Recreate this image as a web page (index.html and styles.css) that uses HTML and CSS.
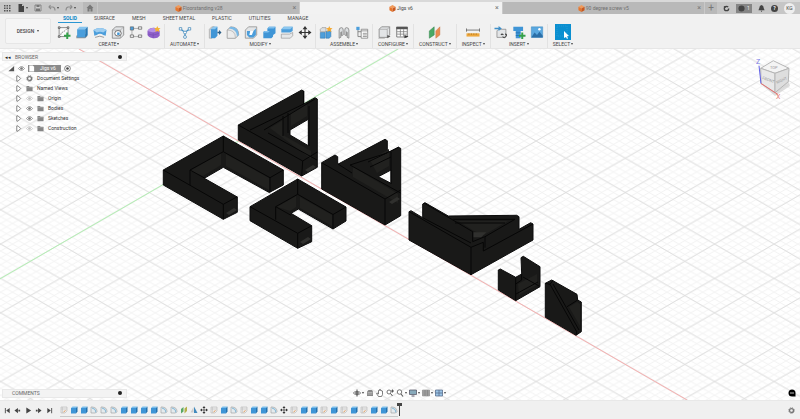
FILE: index.html
```html
<!DOCTYPE html>
<html lang="en">
<head>
<meta charset="utf-8">
<title>Jigs v6</title>
<link rel="stylesheet" href="styles.css">
</head>
<body>
<svg class="defs" aria-hidden="true">
  <defs>
    <symbol id="box" viewBox="0 0 16 16"><path fill="#79bdec" d="M2 4l3-3h10l-3 3z"/><path fill="#3f95d6" d="M2 4h10v11H2z"/><path fill="#2372ae" d="M12 4l3-3v10l-3 4z"/></symbol>
    <symbol id="extrude" viewBox="0 0 16 16"><path fill="#8a8f94" d="M1 12l3-2h9l2 2-3 3H1z"/><path fill="#85c4ef" d="M2 4l3-3h10l-3 3z"/><path fill="#4a9edc" d="M2 4h10v10H2z"/><path fill="#2577b5" d="M12 4l3-3v10l-3 3z"/></symbol>
    <symbol id="sketch" viewBox="0 0 16 16"><path fill="#fafafa" stroke="#777" d="M2 2h11v11H2z"/><path fill="none" stroke="#777" stroke-dasharray="2 1" d="M4 11C4 7 8 8 11 4"/><path fill="#fff" stroke="#333" stroke-width=".8" d="M1 1h2v2H1zM12 1h2v2h-2zM1 12h2v2H1z"/><path stroke="#35a04a" stroke-width="2.400" d="M12 8v8M8 12h8"/></symbol>
    <symbol id="revolve" viewBox="0 0 16 16"><path fill="#4c9edb" d="M0 5q8-5 16 0l-1 7-3-1q-4-3-8 0l-3 1z"/><path fill="#9dcdf0" d="M0 5q8-5 16 0l-4 3q-4-2-8 0z"/><path fill="none" stroke="#888" d="M2 14q6-3 11 0"/></symbol>
    <symbol id="hole" viewBox="0 0 16 16"><path fill="#e2e4e6" stroke="#777" stroke-width=".9" d="M1 5l4-4h10v10l-4 4H1z"/><path fill="none" stroke="#999" stroke-width=".7" d="M1 5h10v10M11 5l4-4"/><ellipse cx="8" cy="9" rx="4" ry="3.400" fill="#fff" stroke="#555"/><path fill="#3f95d6" d="M7 8h3v3H7z"/></symbol>
    <symbol id="pattern" viewBox="0 0 16 16"><path fill="none" stroke="#999" stroke-width=".9" d="M4 3h8M3 4v9M4 13h8"/><path fill="#4c9edb" stroke="#555" stroke-width=".7" d="M1 1h4v4H1z"/><path fill="#eee" stroke="#555" stroke-width=".8" d="M11 1h4v3h-4zM1 11h4v3H1zM11 11h4v3h-4z"/></symbol>
    <symbol id="form" viewBox="0 0 16 16"><path fill="#8e5fc9" d="M0 6q2-4 8-4 6 1 7 4v6q-3 4-8 3-6-1-7-4z"/><path fill="#b58fe6" d="M0 6q3-4 8-4l5 3q-3 3-6 3z"/><path stroke="#7548b3" stroke-width=".7" fill="none" d="M7 8v7M1 10q6 3 13-1"/><path fill="#f3b233" d="M12 0l1.200 2.500 2.800.2-2 2 .6 2.800L12 6 9.600 7.500l.5-2.800-2-2 2.800-.2z"/></symbol>
    <symbol id="automate" viewBox="0 0 16 16"><path fill="none" stroke="#3f8fc8" stroke-width="1.500" d="M3 4l5 4 5-4M8 8v5"/><path fill="#fff" stroke="#4f8fbd" d="M1 2h3v3H1zM12 2h3v3h-3z"/><circle cx="8" cy="8" r="1.800" fill="#fff" stroke="#4f8fbd"/><circle cx="8" cy="13.500" r="1.800" fill="#fff" stroke="#4f8fbd"/></symbol>
    <symbol id="presspull" viewBox="0 0 16 16"><path fill="#d5d8da" stroke="#888" stroke-width=".6" d="M1 4l3-3h3v11l-3 3H1z"/><path fill="#3f95d6" d="M3 4l3-3h5v11l-3 3H3z"/><path fill="#8cc7ef" d="M3 4l3-3h5L8 4z"/><path fill="#2c5f88" d="M11 7h2V5l3 3-3 3V9h-2z"/></symbol>
    <symbol id="fillet" viewBox="0 0 16 16"><path fill="#e3e5e7" stroke="#888" stroke-width=".9" d="M1 5l4-4q10 0 10 10l-4 4H1z"/><path fill="#7ab9e6" d="M3 3l2-2q10 0 10 10l-2 2Q13 4 3 3z"/><path fill="#ececec" stroke="#999" stroke-width=".6" d="M1 5q10 0 10 10H1z"/></symbol>
    <symbol id="shell" viewBox="0 0 16 16"><path fill="#e3e5e7" stroke="#888" stroke-width=".9" d="M1 5l4-4h10v10l-4 4H1z"/><path fill="#4c9edb" d="M3 6h8l3-3v8l-3 3H6L3 11z"/><path fill="#fff" d="M7 6h4l-2 5H6z"/></symbol>
    <symbol id="combine" viewBox="0 0 16 16"><path fill="#3f95d6" d="M6 3l2-2h8v8l-3 2v2l-2 2H1V7l2-1h3z"/><path fill="#80c0ee" d="M6 3l2-2h8l-2 2zM1 8l2-2h6L7 8z"/></symbol>
    <symbol id="split" viewBox="0 0 16 16"><path fill="#4c9edb" d="M1 4l3-3h11v5l-3 2H1z"/><path fill="#8cc7ef" d="M1 4l3-3h11l-3 3z"/><path fill="#e6e8ea" stroke="#888" stroke-width=".7" d="M1 10h10l4-2v4l-3 3H1z"/></symbol>
    <symbol id="move" viewBox="0 0 16 16"><path stroke="#333" stroke-width="1.400" d="M8 2v12M2 8h12"/><path fill="#333" d="M8 0l3 4H5zM8 16l3-4H5zM0 8l4-3v6zM16 8l-4-3v6z"/></symbol>
    <symbol id="component" viewBox="0 0 16 16"><path fill="#dcdfe1" stroke="#888" stroke-width=".7" d="M1 4l2-2h5v5H1z"/><path fill="#4c9edb" stroke="#2c6fa5" stroke-width=".6" d="M1 8h6v7H1zM8 7l2-1h4v7l-2 2H8z"/><path fill="#f3a933" d="M12 0l1.200 2.500 2.800.2-2 2 .6 2.800L12 6 9.600 7.500l.5-2.800-2-2 2.800-.2z"/></symbol>
    <symbol id="joint" viewBox="0 0 16 16"><path fill="#dcdfe1" stroke="#777" stroke-width=".9" d="M2 15V5q0-3 3-3 2 0 2 3v6l-2 1V7L4 8v6zM14 15V5q0-3-3-3-2 0-2 3v6l2 1V7l1 1v6z"/></symbol>
    <symbol id="structure" viewBox="0 0 16 16"><path fill="none" stroke="#777" d="M3 5v8h4M3 7h4"/><path fill="#4c9edb" d="M1 1h4v4H1z"/><path fill="#fff" stroke="#777" stroke-width=".9" d="M7 4h8v11H7z"/><path stroke="#777" stroke-width=".9" d="M7 6h8M9 9h5M9 11h5M9 13h5"/></symbol>
    <symbol id="config" viewBox="0 0 16 16"><path fill="#e3e5e7" stroke="#777" stroke-width=".9" d="M2 4l3-3h10v10l-3 3H2z"/><path fill="none" stroke="#999" stroke-width=".8" d="M2 4h10v10M12 4l3-3M1 15h8"/><path fill="#555" d="M12 11l4 2-4 2z"/></symbol>
    <symbol id="table" viewBox="0 0 16 16"><path fill="#fff" stroke="#666" d="M1.500 1.500h13v12h-13z"/><path fill="#555" d="M1 1h14v3H1z"/><path stroke="#777" stroke-width=".9" d="M2 7h12M2 10h12M6 4v9M10 4v9"/><path fill="#333" d="M11 11l5 2-5 2z"/></symbol>
    <symbol id="plane" viewBox="0 0 16 16"><path fill="#49a965" stroke="#2f8048" stroke-width=".6" d="M1 6l6-5v10l-6 4z"/><path fill="#e98c50" stroke="#c06a38" stroke-width=".5" d="M9 6l5-5v10l-5 4z"/></symbol>
    <symbol id="measure" viewBox="0 0 16 16"><path fill="none" stroke="#555" stroke-width=".9" d="M0 5h16M0 3v4M16 3v4"/><path fill="#eda73c" d="M0 9h16v4H0z"/><path stroke="#a8701c" stroke-width=".8" d="M3 9v2M6 9v2M9 9v2M12 9v2"/></symbol>
    <symbol id="derive" viewBox="0 0 16 16"><path fill="#e3e5e7" stroke="#777" stroke-width=".8" d="M3 6l2-2h9v8l-2 2H3z"/><path fill="#3f8fc8" d="M0 2h5V0l4 3-4 3V4H0z"/><path fill="none" stroke="#444" stroke-width="1.300" d="M8 11q1-2 3 0M10 13q2 3 4 0 2-3-1-3"/></symbol>
    <symbol id="bolt" viewBox="0 0 16 16"><path fill="#3f95d6" d="M1 1h12v5h-3v9H4V6H1z"/><path fill="#1f6daa" d="M4 8h6v1H4zM4 11h6v1H4z"/><path stroke="#35a04a" stroke-width="2.400" d="M12 8v8M8 12h8"/></symbol>
    <symbol id="canvas" viewBox="0 0 16 16"><path fill="#5aa8e0" stroke="#3d85ba" stroke-width=".6" d="M1 1h14v13H1z"/><path fill="#2b6fa8" d="M1 14l4-6 3 3 3-4 4 5v2z"/><circle cx="11" cy="4" r="1.500" fill="#fff"/></symbol>
    <symbol id="select" viewBox="0 0 16 16"><path fill="#0a8fd0" d="M0 0h16v16H0z"/><path fill="none" stroke="#2fa3da" stroke-width=".6" stroke-dasharray="1 1" d="M2 2h10v10H2z"/><path fill="#fff" d="M9 7l5 5-2 .3 1 2-1 .6-1-2-2 1z"/></symbol>
    <symbol id="t-sketch" viewBox="0 0 16 16"><path fill="#ececec" stroke="#aaa" d="M2 2h12v8l-4 4H2z"/><path fill="none" stroke="#bbb" d="M5 2v12M2 6h12"/><path stroke="#e59c58" stroke-width="2" d="M7 12l4-3"/></symbol>
    <symbol id="t-fillet" viewBox="0 0 16 16"><path fill="#e4eaed" stroke="#888" d="M2 5V2h3q9 1 9 9l-3 3H2z"/><path fill="none" stroke="#5fa5d0" stroke-width="1.500" d="M4 4q8 1 8 9"/></symbol>
    <symbol id="t-plane" viewBox="0 0 16 16"><path fill="#59a864" d="M2 6l5-4v9l-5 4z"/><path fill="#b4b04a" d="M9 5l5-4v9l-5 5z"/></symbol>
    <symbol id="t-mirror" viewBox="0 0 16 16"><path fill="#ccc" d="M7 2v11H1z"/><path fill="#4189bd" d="M8 1v13h7z"/></symbol>
    <symbol id="cube" viewBox="0 0 16 16"><path fill="#f19a5a" d="M8 0l7 4-7 4-7-4z"/><path fill="#e87529" d="M1 4l7 4v8l-7-4z"/><path fill="#c9571b" d="M15 4L8 8v8l7-4z"/></symbol>
    <symbol id="folder" viewBox="0 0 16 16"><path fill="#858585" d="M1 2h6l1 2h7v10H1z"/><path stroke="#bbb" d="M1 6h14"/></symbol>
    <symbol id="eye" viewBox="0 0 16 16"><path fill="#fff" stroke="currentColor" stroke-width="1.600" d="M1 8q7-9 14 0-7 9-14 0z"/><circle cx="8" cy="8" r="3" fill="currentColor"/></symbol>
    <symbol id="gear" viewBox="0 0 16 16"><circle cx="8" cy="8" r="4.500" fill="none" stroke="currentColor" stroke-width="3"/><circle cx="8" cy="8" r="6.500" fill="none" stroke="currentColor" stroke-width="2" stroke-dasharray="2.500 2.600"/></symbol>
    <symbol id="arrow" viewBox="0 0 16 16"><path fill="#fff" stroke="#555" stroke-width="1.600" d="M4 2h3l6 6-6 6H4z"/></symbol>
    <symbol id="undo" viewBox="0 0 16 16"><path fill="none" stroke="#8c8c8c" stroke-width="2.200" d="M5 2L2 6l4 4M2 6h8q4 1 4 7"/></symbol>
    <symbol id="lens" viewBox="0 0 16 16"><circle cx="7" cy="6" r="4.500" fill="#fff" stroke="#555" stroke-width="1.600"/><path stroke="#555" stroke-width="2.200" d="M10 10l4 5"/></symbol>
    <pattern id="minor" width="11.900" height="6.872" x="238.600" y="141" patternUnits="userSpaceOnUse"><path d="M0 0l11.900 6.872M0 6.872L11.900 0" stroke="#efefef" stroke-width=".8"/></pattern>
    <pattern id="major" width="59.500" height="34.360" x="238.600" y="141" patternUnits="userSpaceOnUse"><path d="M0 0l59.500 34.360M0 34.360L59.500 0" stroke="#dadada" stroke-width=".8"/></pattern>
  </defs>
</svg>

<header class="topbar">
  <div class="quick">
    <button aria-label="Data panel"><svg viewBox="0 0 16 16"><path fill="#555" d="M2 2h3v3H2zM7 2h3v3H7zM12 2h3v3h-3zM2 7h3v3H2zM7 7h3v3H7zM12 7h3v3h-3zM2 12h3v3H2zM7 12h3v3H7zM12 12h3v3h-3z"/></svg></button>
    <button class="drop" aria-label="File"><svg viewBox="0 0 16 16"><path fill="#444" d="M3 0h7l4 4v12H3z"/><path fill="#ccc" d="M10 0l4 4h-4z"/></svg></button>
    <button aria-label="Save"><svg viewBox="0 0 16 16"><path fill="#ccc" stroke="#777" stroke-width="1.600" d="M2 2h12v12H2z"/><path fill="#777" d="M5 2h6v4H5zM4 9h8v5H4z"/></svg></button>
    <button class="drop" aria-label="Undo"><svg><use href="#undo"/></svg></button>
    <button class="drop" aria-label="Redo"><svg class="flip"><use href="#undo"/></svg></button>
    <button class="home" aria-label="Home"><svg viewBox="0 0 16 16"><path fill="#777" d="M8 1l7 7h-2v7h-4v-5H7v5H3V8H1z"/></svg></button>
  </div>
  <nav class="docs">
    <div class="doc"><svg><use href="#cube"/></svg><a href="#">Floorstanding v28</a><button aria-label="Close">×</button></div>
    <div class="doc active"><svg><use href="#cube"/></svg><a href="#">Jigs v6</a><button aria-label="Close">×</button></div>
    <div class="doc"><svg><use href="#cube"/></svg><a href="#">90 degree screw v5</a><button aria-label="Close">×</button></div>
  </nav>
  <div class="account">
    <button class="add" aria-label="New design">+</button>
    <button aria-label="Extensions"><svg viewBox="0 0 16 16"><circle cx="8" cy="8" r="5" fill="none" stroke="#444" stroke-width="3" stroke-dasharray="25 6"/><path fill="#444" d="M1 2h6v5z"/></svg></button>
    <button class="jobs" aria-label="Job status"><svg viewBox="0 0 16 16"><circle cx="8" cy="8" r="7" fill="#444"/></svg>1</button>
    <button aria-label="Notifications"><svg viewBox="0 0 16 16"><path fill="#444" d="M8 0q5 1 5 7l2 5H1l2-5q0-6 5-7zM6 13h4l-2 3z"/></svg></button>
    <button class="help" aria-label="Help">?</button>
    <button class="avatar">KG</button>
  </div>
</header>

<section class="ribbon">
  <button class="design drop">DESIGN</button>
  <div class="tools">
    <nav class="modes">
      <a class="on" href="#">SOLID</a><a href="#">SURFACE</a><a href="#">MESH</a><a href="#">SHEET METAL</a><a href="#">PLASTIC</a><a href="#">UTILITIES</a><a href="#">MANAGE</a>
    </nav>
    <div class="groups">
      <div class="group"><div class="icons"><svg><use href="#sketch"/></svg><svg><use href="#extrude"/></svg><svg><use href="#revolve"/></svg><svg><use href="#hole"/></svg><svg><use href="#pattern"/></svg><svg><use href="#form"/></svg></div><button class="drop">CREATE</button></div>
      <div class="group"><div class="icons"><svg><use href="#automate"/></svg></div><button class="drop">AUTOMATE</button></div>
      <div class="group"><div class="icons"><svg><use href="#presspull"/></svg><svg><use href="#fillet"/></svg><svg><use href="#shell"/></svg><svg><use href="#combine"/></svg><svg><use href="#split"/></svg><svg><use href="#move"/></svg></div><button class="drop">MODIFY</button></div>
      <div class="group"><div class="icons"><svg><use href="#component"/></svg><svg><use href="#joint"/></svg><svg><use href="#structure"/></svg></div><button class="drop">ASSEMBLE</button></div>
      <div class="group"><div class="icons"><svg><use href="#config"/></svg><svg><use href="#table"/></svg></div><button class="drop">CONFIGURE</button></div>
      <div class="group"><div class="icons"><svg><use href="#plane"/></svg></div><button class="drop">CONSTRUCT</button></div>
      <div class="group"><div class="icons"><svg><use href="#measure"/></svg></div><button class="drop">INSPECT</button></div>
      <div class="group"><div class="icons"><svg><use href="#derive"/></svg><svg><use href="#bolt"/></svg><svg><use href="#canvas"/></svg></div><button class="drop">INSERT</button></div>
      <div class="group"><div class="icons big"><svg><use href="#select"/></svg></div><button class="drop">SELECT</button></div>
    </div>
  </div>
</section>

<main class="viewport">
  <svg class="scene" viewBox="0 49 800 351" preserveAspectRatio="xMidYMid slice" role="img" aria-label="Model">
    <path fill="#fff" d="M0 49h800v351H0z"/>
    <path fill="url(#minor)" d="M0 49h800v351H0z"/>
    <path fill="url(#major)" d="M0 49h800v351H0z"/>
    <path stroke="#b4f0b4" d="M0 278.800L398 49"/>
    <path stroke="#f6b0b0" d="M79 49l608 351"/>
    <g class="solid">
      <path d="M238.300 125L301.700 90l2 1v13L315 97.700l2.300 1.300v68.300L301.700 176l-63.400-36zM308.300 119.300L290 130v5l18.300 10.700z"/>
      <path d="M163.300 170l60-34 60 34v15l-14 7.500-46-25.200-19 11 33 18.700v15.300l-14 7-60-34.300z"/>
      <path d="M250 206.700l47.700-27.700L346 207v14l-13 8-34.700-20-7.300 4.300 20.700 12.400v16l-14 6.600L250 220.700z"/>
      <path d="M321.700 162.700L335 155l2.700 1.700v7.600L385 139.300l2.300 1.400v12.600l11-6 2.400 1v67.400L385 225l-63.300-36zM391 170l-12.700 6.700L391 183.300z"/>
      <path d="M409 211.700l2-1 11.700 7V204l2.300-1.300 23.300 13.300 68.400-.7 2.300 1.400v12.600l11.700-6.600 2.300 1.300v16l-62 34.700L409 240z"/>
      <path d="M498.300 270l2-1 15.400 8.300 6-3.300-.7-16.300 2.300-1.400L540 266.700v20l-24.300 14-17.400-10.700z"/>
      <path d="M545.300 283.300l6.400-3.300L577 294.300l.7 5.700 3.600 2v29.700l-5.300 3.600-30.700-18z"/>
    </g>
    <g class="shade">
      <path d="M226 154l43 24v12l-43-24zM190 171l31-18v12l-18 11z"/>
      <path d="M300 197l32 18v11l-32-18zM277 207l19-11v11l-6 4z"/>
      <path d="M270 128l13-8v15l28 16v8zM291 113l16-9v12l-16 10z"/>
      <path d="M353 167l45 27v9l-45-26zM370 160l19-11v17l-12 7z"/>
      <path d="M458 221h50l-24 14-10-4zM518 284l19-10v11l-18 10z"/>
      <path d="M569 307l8-5 3 2v22z"/>
    </g>
    <path fill="#30302e" d="M473.300 232.300h13l-5 5h-8zM226 213l8-5 3 2-8 5zM300 242l8-5 3 2-8 5zM305 170l8-5 3 2-8 5zM389 202l8-5 3 2-8 5z"/>
    <g class="edges">
      <path d="M163.300 170l60 34.300v15M223.300 204.300l14-7.600M223.300 136v15.700l46.700 26v14.600M270 177.700l13.300-7.700M223.300 151.700L190 170v15M190 170l15 8.300"/>
      <path d="M250 206.700l47.700 26.600v15M297.700 233.300l14-7.600M297.700 179v15.300L333 214.500V229M333 214.500l13-7.500M297.700 194.300l-22 12.400v13M275.700 206.700l15.300 8.600"/>
      <path d="M238.300 125l64.400 36-1 15M302.700 161l14.600-9M250 130l53.700-26M264 130l51-31M268 133l49 27M283 116v20M288 113v20M309 106v40M303.700 91v13"/>
      <path d="M321.700 162.700L385 199v26M385 199l15.700-9M350 165l50.700 28M338 164l14 9M350 165l37-12M368 162l31-15M391 152v32M370 167l21-10"/>
      <path d="M409 211.700l62 35.600v27.400M471 247.300l12.300-5V251l49.700-27M422.700 217.700L471 243M424 203l48.700 28.700v10M453.300 219.300H515L485 236.700v11M472.700 241.700l12-5M455 223h50"/>
      <path d="M515.700 277.300v23.400M516 294l22-12M523 277l16 9M521.700 274v6l-6 4"/>
      <path d="M545.300 283.300l4.700 1 26.700 47.400-.7 3.600M553 284l26 46M567 306.700l10.700-6.700M550 284.300l3-4"/>
    </g>
    <g class="viewcube">
      <path fill="#bbb" opacity=".5" d="M761 84l14 12 15-10-2-6-26 2z"/>
      <path class="face" fill="#f4f4f4" d="M760.700 68.300l12.600-7.600L789 68.300l-14 5z"/>
      <path class="face" fill="#e9e9e9" d="M760.700 68.300l14.300 5v19.400L761 83.300z"/>
      <path class="face" fill="#dedede" d="M789 68.300l-14 5v19.400l13.300-11z"/>
      <path stroke="#6060e6" d="M759 65.700l2 18"/><path stroke="#e87070" d="M761 83.500l17 11"/>
      <text x="770" y="69">TOP</text><text x="762" y="79" transform="rotate(20 762 79)">FRONT</text><text x="777" y="84" transform="rotate(-25 777 84)">RIGHT</text>
      <text class="axis z" x="756" y="64">Z</text><text class="axis x" x="776" y="99">X</text>
    </g>
  </svg>

  <aside class="browser">
    <div class="panel"><span class="rewind">◂◂</span><span>BROWSER</span><button class="dot" aria-label="Minimize"></button></div>
    <ul class="tree">
      <li class="root"><svg viewBox="0 0 16 16"><path fill="#555" d="M1 14L14 2v12z"/></svg><svg><use href="#eye"/></svg><span class="name"><svg viewBox="0 0 16 16"><path fill="#fff" d="M3 1h8l3 3v11H3z"/></svg>Jigs v6</span><svg viewBox="0 0 16 16"><circle cx="8" cy="8" r="6.500" fill="#fff" stroke="#444" stroke-width="1.500"/><circle cx="8" cy="8" r="3" fill="#444"/></svg></li>
      <li><svg><use href="#arrow"/></svg><svg><use href="#gear"/></svg><span>Document Settings</span></li>
      <li><svg><use href="#arrow"/></svg><svg><use href="#folder"/></svg><span>Named Views</span></li>
      <li><svg><use href="#arrow"/></svg><svg class="off"><use href="#eye"/></svg><svg><use href="#folder"/></svg><span>Origin</span></li>
      <li><svg><use href="#arrow"/></svg><svg><use href="#eye"/></svg><svg><use href="#folder"/></svg><span>Bodies</span></li>
      <li><svg><use href="#arrow"/></svg><svg><use href="#eye"/></svg><svg><use href="#folder"/></svg><span>Sketches</span></li>
      <li><svg><use href="#arrow"/></svg><svg class="off"><use href="#eye"/></svg><svg><use href="#folder"/></svg><span>Construction</span></li>
    </ul>
  </aside>

  <footer class="status">
    <div class="panel comments"><span>COMMENTS</span><button class="dot" aria-label="Expand"></button></div>
    <div class="navbar">
      <button class="drop" aria-label="Orbit"><svg viewBox="0 0 16 16"><ellipse cx="8" cy="8" rx="7" ry="3" fill="none" stroke="#555" stroke-width="1.500"/><path stroke="#444" stroke-width="2" d="M8 1v14M4 8h8"/></svg></button>
      <button aria-label="Look at"><svg viewBox="0 0 16 16"><path fill="#888" d="M2 5l3-3h7l2 3v9H2z"/><path stroke="#ddd" d="M3 7h10M3 10h10"/></svg></button>
      <button aria-label="Pan"><svg viewBox="0 0 16 16"><path fill="#fff" stroke="#555" stroke-width="1.500" d="M5 15L1 9l1-1 3 2V3h2V1h2v2h2v1h2v7l-2 4z"/></svg></button>
      <button aria-label="Zoom"><svg viewBox="0 0 16 16"><circle cx="6" cy="6" r="4" fill="#fff" stroke="#555" stroke-width="1.600"/><path stroke="#555" stroke-width="2" d="M9 9l4 5M13 1v6M10 4h6"/></svg></button>
      <button class="drop" aria-label="Fit"><svg><use href="#lens"/></svg></button>
      <button class="drop" aria-label="Display"><svg viewBox="0 0 16 16"><path fill="#8ab" stroke="#556" stroke-width="1.500" d="M1 2h14v9H1z"/><path fill="#556" d="M5 13h6v2H5z"/></svg></button>
      <button class="drop" aria-label="Grid"><svg viewBox="0 0 16 16"><path fill="#aaa" stroke="#777" d="M1 2h14v12H1z"/><path stroke="#777" d="M1 6h14M1 10h14M6 2v12M11 2v12"/></svg></button>
      <button class="drop" aria-label="Viewports"><svg viewBox="0 0 16 16"><path fill="#9bc4e6" stroke="#556a88" stroke-width="1.500" d="M1 2h14v12H1zM8 2v12M1 8h14"/></svg></button>
    </div>
    <button class="chat" aria-label="Assistant"><svg viewBox="0 0 16 16"><path d="M8 1q7 0 7 7v7H8q-7 0-7-7t7-7z"/><path stroke="#fff" stroke-width="1.500" d="M4 8h8"/></svg></button>
  </footer>
</main>

<section class="timeline">
  <div class="play">
    <button aria-label="First"><svg viewBox="0 0 16 16"><path d="M2 2h2v12H2zM13 2v12L5 8z"/></svg></button>
    <button aria-label="Back"><svg viewBox="0 0 16 16"><path d="M9 2v12L1 8zM10 6h4v4h-4z"/></svg></button>
    <button aria-label="Play"><svg viewBox="0 0 16 16"><path d="M3 1v14l11-7z"/></svg></button>
    <button aria-label="Forward"><svg viewBox="0 0 16 16"><path d="M7 2v12l8-6zM2 6h4v4H2z"/></svg></button>
    <button aria-label="Last"><svg viewBox="0 0 16 16"><path d="M12 2h2v12h-2zM3 2v12l8-6z"/></svg></button>
  </div>
  <div class="steps">
    <svg><use href="#t-sketch"/></svg><svg><use href="#box"/></svg><svg><use href="#box"/></svg><svg><use href="#t-fillet"/></svg><svg><use href="#t-fillet"/></svg><svg><use href="#t-fillet"/></svg><svg><use href="#box"/></svg><svg><use href="#box"/></svg><svg><use href="#box"/></svg><svg><use href="#box"/></svg><svg><use href="#t-fillet"/></svg><svg><use href="#t-fillet"/></svg><svg><use href="#t-plane"/></svg><svg><use href="#t-mirror"/></svg><svg><use href="#move"/></svg><svg><use href="#t-sketch"/></svg><svg><use href="#box"/></svg><svg><use href="#t-fillet"/></svg><svg><use href="#t-sketch"/></svg><svg><use href="#box"/></svg><svg><use href="#box"/></svg><svg><use href="#t-fillet"/></svg><svg><use href="#move"/></svg><svg><use href="#t-sketch"/></svg><svg><use href="#box"/></svg><svg><use href="#box"/></svg><svg><use href="#t-sketch"/></svg><svg><use href="#box"/></svg><svg><use href="#t-sketch"/></svg><svg><use href="#box"/></svg><svg><use href="#t-sketch"/></svg><svg><use href="#box"/></svg><svg><use href="#box"/></svg><svg><use href="#t-fillet"/></svg>
    <i class="marker"></i>
  </div>
  <button class="settings" aria-label="Timeline settings"><svg><use href="#gear"/></svg></button>
</section>
</body>
</html>
```
FILE: styles.css
```css
* { box-sizing: border-box; }
body {
  margin: 0;
  height: 100vh;
  display: flex;
  flex-direction: column;
  overflow: hidden;
  font: 5px/8px Roboto, "Liberation Sans", sans-serif;
  color: #444;
  background: #f1f1f1;
}
button {
  display: flex;
  align-items: center;
  justify-content: center;
  margin: 0;
  padding: 0;
  border: 0;
  background: none;
  font: inherit;
  color: inherit;
}
a { color: inherit; text-decoration: none; }
svg { display: block; flex: none; width: 8px; height: 8px; }
.defs { position: absolute; width: 0; height: 0; }
.drop::after {
  content: "";
  margin-left: 1px;
  border: 1px solid transparent;
  border-top: 2px solid #444;
  border-bottom: 0;
}

/* Title bar */
.topbar {
  display: flex;
  flex: none;
  height: 14px;
  border-top: 2px solid #d9d9d9;
  background: #c6c6c6;
}
.quick { display: flex; align-items: center; width: 98px; padding-left: 3px; gap: 6px; }
.quick .home { margin-left: auto; width: 14px; height: 12px; margin-right: 1px; background: #b9b9b9; }
.flip { transform: scaleX(-1); }
.docs { display: flex; flex: 1; }
.doc {
  position: relative;
  display: flex;
  flex: 1;
  align-items: center;
  justify-content: center;
  gap: 1px;
  background: #b9b9b9;
  color: #707070;
  border-right: 1px solid #c9c9c9;
}
.doc svg { width: 7px; height: 7px; }
.doc button { position: absolute; right: 3px; top: 2px; font-size: 7px; color: #777; }
.doc.active { background: #f2f2f2; color: #444; }
.account { display: flex; align-items: center; width: 95px; padding-right: 5px; justify-content: space-between; }
.account svg { width: 7px; height: 7px; }
.account .add { width: 12px; height: 12px; background: #b9b9b9; font-size: 10px; color: #777; }
.account .jobs { width: 16px; height: 9px; gap: 2px; background: #858585; color: #eee; }
.account .help { width: 7px; height: 7px; border-radius: 50%; background: #444; color: #fff; font-weight: bold; }
.account .avatar { width: 11px; height: 11px; border-radius: 50%; background: #eee; }

/* Ribbon */
.ribbon { display: flex; flex: none; height: 35px; border-bottom: 1px solid #e6e6e6; }
.design {
  width: 46px;
  height: 26px;
  margin: 4px 3px 0 5px;
  border: 1px solid #e6e6e6;
  border-radius: 2px;
  background: #f5f5f5;
  font-weight: 500;
}
.design.drop::after { margin-left: 3px; }
.modes { display: flex; gap: 17px; height: 10px; padding-left: 9px; line-height: 9px; }
.modes .on { position: relative; color: #0a84c6; font-weight: bold; }
.modes .on::after { content: ""; position: absolute; inset: 8px -5px 0; height: 1px; background: #2a96d3; }
.groups { display: flex; }
.group { padding: 0 1px; border-right: 1px solid #e2e2e2; }
.group:last-child { border: 0; }
.icons { display: flex; justify-content: center; height: 16px; align-items: center; }
.icons svg { width: 18px; height: 13px; }
.icons.big svg { height: 16px; }
.group button { width: 100%; padding: 0 4px; }

/* Viewport */
.viewport { position: relative; display: flex; flex: 1; flex-direction: column; justify-content: space-between; min-height: 0; }
.scene { position: absolute; inset: 0; width: 100%; height: 100%; }
.scene path { fill-rule: evenodd; }
.solid { fill: #191918; stroke: #0c0c0c; stroke-width: 1; stroke-linejoin: round; }
.shade { fill: #21211f; }
.edges { fill: none; stroke: #060606; stroke-width: 1; }
.viewcube { font-size: 4px; fill: #999; stroke-width: 1; }
.viewcube .face { stroke: #b5b5b5; }
.viewcube .axis { font-size: 7px; }
.z { fill: #7a7ae6; }
.x { fill: #e67a7a; }
.browser, .status { position: relative; }
.browser { padding: 3px 0 0 2px; }
.panel {
  display: flex;
  align-items: center;
  gap: 4px;
  width: 125px;
  height: 9px;
  padding: 0 4px 0 2px;
  border: 1px solid #e8e8e8;
  background: #f3f3f3;
  color: #666;
}
.rewind { color: #222; }
.dot { width: 4px; height: 4px; margin-left: auto; border-radius: 50%; background: #222; }
.tree { margin: 2px 0 0; padding: 0 0 0 13px; list-style: none; }
.tree li { display: flex; align-items: center; gap: 4px; height: 10px; color: #333; }
.tree svg { width: 7px; height: 7px; color: #777; }
.tree svg.off { color: #bbb; }
.tree .root { margin-left: -7px; gap: 3px; }
.name { display: flex; align-items: center; gap: 5px; width: 33px; height: 7px; background: #8a8a8a; color: #fff; }
.status { display: grid; grid-template-columns: 1fr auto 1fr; align-items: center; height: 14px; padding: 0 4px 0 2px; }
.comments { padding-left: 9px; }
.navbar { display: flex; gap: 2px; }
.chat { justify-self: end; }

/* Timeline */
.timeline { display: flex; flex: none; align-items: center; height: 19px; padding: 0 5px 0 2px; background: #f0f0f0; border-top: 1px solid #e8e8e8; }
.play { display: flex; justify-content: space-between; width: 52px; fill: #444; }
.play button { width: 10px; }
.play svg { width: 7px; height: 7px; }
.steps { position: relative; display: flex; gap: 2px; margin-left: 6px; padding: 3px 0 2px; border-bottom: 1px solid #c9c9c9; }
.marker { position: absolute; right: -4px; top: 0; width: 5px; height: 13px; border-top: 3px solid #444; }
.marker::after { content: ""; display: block; width: 1px; height: 10px; margin: 0 auto; background: #444; }
.settings { margin-left: auto; color: #777; }
.settings svg { width: 7px; height: 7px; }
```
